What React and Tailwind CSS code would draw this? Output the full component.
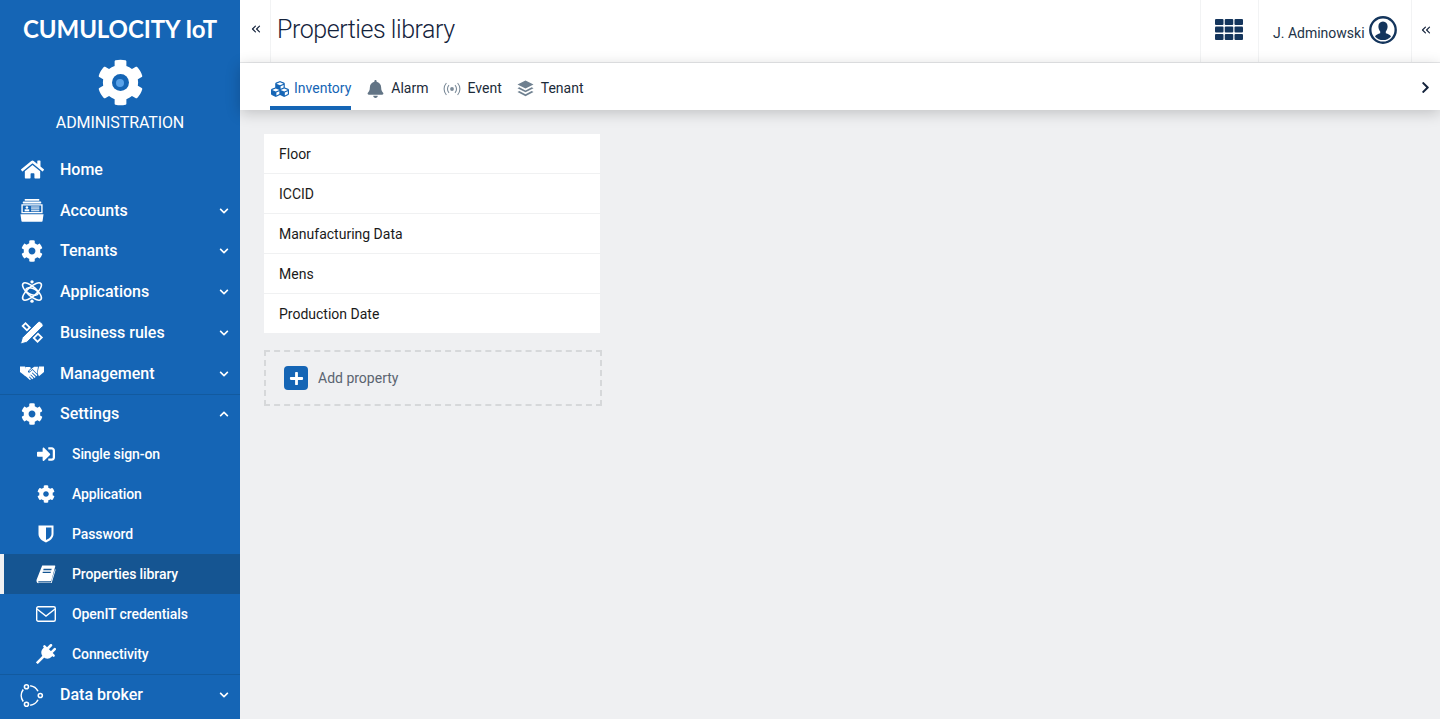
import React from "react";
import {
  FaHome,
  FaCog,
  FaSignInAlt,
  FaBell,
  FaCubes,
  FaPlus,
  FaChevronDown,
  FaChevronUp,
  FaChevronRight,
} from "react-icons/fa";
import { FiChevronsLeft } from "react-icons/fi";

const AccountsIcon = ({ className }) => (
  <svg viewBox="0 0 26 25" className={className} fill="currentColor">
    <rect x="5" y="0" width="16" height="2" rx="0.5" />
    <rect x="3" y="2.800" width="20" height="2" rx="0.5" />
    <path d="M1.500 5.600h23v10h-23z M3 7.100v7h20v-7z" fillRule="evenodd" />
    <circle cx="7.500" cy="9.300" r="1.400" />
    <rect x="5" y="11.200" width="5" height="2.200" />
    <rect x="12" y="8.200" width="9" height="1.100" />
    <rect x="12" y="10.200" width="9" height="1.100" />
    <rect x="12" y="12.200" width="9" height="1.100" />
    <path d="M0.500 16.600h25l-1 7a1 1 0 0 1-1 1h-21a1 1 0 0 1-1-1z" />
  </svg>
);

const AtomIcon = ({ className }) => (
  <svg viewBox="0 0 26 26" className={className} fill="none" stroke="currentColor" strokeWidth="1.700">
    <ellipse cx="13" cy="13" rx="13" ry="5" transform="rotate(42 13 13)" />
    <ellipse cx="13" cy="13" rx="13" ry="5" transform="rotate(-42 13 13)" />
    <ellipse cx="13" cy="13" rx="7" ry="3.500" transform="rotate(20 13 13)" />
    <circle cx="13" cy="2.500" r="1.800" fill="currentColor" stroke="none" />
    <circle cx="13" cy="23.500" r="1.800" fill="currentColor" stroke="none" />
  </svg>
);

const RulerIcon = ({ className }) => (
  <svg viewBox="0 0 26 26" className={className} fill="currentColor">
    <path
      d="M6 1.500L12 7.500 7.500 12 1.500 6z M6 4.300L4.300 6 7.500 9.200 9.200 7.500z"
      fillRule="evenodd"
    />
    <path
      d="M19.500 13L25 18.500 19 24.500 13.500 19z M19.500 15.800L16.300 19 19 21.700 22.200 18.500z"
      fillRule="evenodd"
    />
    <path
      d="M0.500 25.500l2-7L19.500 1.500a2 2 0 0 1 2.800 0l2.200 2.200a2 2 0 0 1 0 2.800L7.500 23.500z"
      stroke="#1565b5"
      strokeWidth="1"
    />
  </svg>
);

const HandshakeIcon = ({ className }) => (
  <svg viewBox="0 0 26 17" className={className} fill="currentColor">
    <path d="M0 1h5.500l2.500 8.500-2 2L0 7z" />
    <path d="M26 1h-5.500L19 8l1.500 3.500L26 7z" />
    <path d="M6 1.500h4.500L12 2.500 8.800 5.800c-.7.800.4 2.300 1.700 1.600l3-2.700 5.300 5.300-.8 1.500-4.600-4.200-.6.600 4.200 4.400-1.300 1.100-3.900-3.900-.6.600 3.400 3.500-1.300 1.200-3-3-.6.600 2.200 2.500-1.200.7-6-5.600z" />
    <path d="M13.500 2.500l2-1.200h4l-1.200 7.200-4.800-4.800-2.600 2.500c-.6.500-1.300-.2-.9-.7z" />
  </svg>
);

const ShieldIcon = ({ className }) => (
  <svg viewBox="0 0 16 18" className={className} fill="currentColor">
    <path
      d="M0.500 0.500h15v8.500c0 4-3.500 7-7.500 8.500C4 16 0.500 13 0.500 9z M8 2.500v12.600c2.600-1.200 5.500-3.300 5.500-6.100V2.500z"
      fillRule="evenodd"
    />
  </svg>
);

const BookIcon = ({ className }) => (
  <svg viewBox="0 0 20 20" className={className} fill="currentColor">
    <path
      d="M6 0.500h13c.6 0 .9.500.7 1l-4 14.500c-.2.700-.8 1-1.500 1H2.800c-1 0-1.300.8-1 1.200.3.300.7.300 1 .3h12.400l4.500-14.500.3 1.500-4 13.500H2.500C1 19.500 0 18 0 16.500c0-.5 0-.8.200-1.300z M7.500 4l-.4 1.400h8.500l.4-1.400z M6.700 7l-.4 1.400h8.500l.4-1.400z"
      fillRule="evenodd"
    />
  </svg>
);

const EnvelopeIcon = ({ className }) => (
  <svg viewBox="0 0 20 16" className={className} fill="none" stroke="currentColor" strokeWidth="1.400">
    <rect x="0.700" y="0.700" width="18.600" height="14.600" rx="1.500" />
    <path d="M1 3l9 7 9-7" />
  </svg>
);

const PlugIcon = ({ className }) => (
  <svg viewBox="0 0 20 20" className={className} fill="currentColor">
    <g transform="rotate(45 10 10)">
      <rect x="6" y="-1" width="2.600" height="6.500" rx="1.300" />
      <rect x="11.400" y="-1" width="2.600" height="6.500" rx="1.300" />
      <path d="M3.500 4.500h13a1 1 0 0 1 0 2.500h-.5v1c0 3.500-2.500 6-6 6s-6-2.500-6-6V7h-.5a1 1 0 0 1 0-2.500z" />
      <rect x="8.700" y="13" width="2.600" height="10" />
    </g>
  </svg>
);

const BrokerIcon = ({ className }) => (
  <svg viewBox="0 0 26 26" className={className} fill="none" stroke="currentColor" strokeWidth="1.700">
    <circle cx="7" cy="3.500" r="2.200" />
    <circle cx="22" cy="13" r="2.200" />
    <circle cx="7" cy="22.500" r="2.200" />
    <path d="M11 2.400a11 11 0 0 1 8.500 6" />
    <path d="M19.500 17.600a11 11 0 0 1-8.500 6" />
    <path d="M3.500 19.500a11 11 0 0 1 0-13" />
  </svg>
);

const EventIcon = ({ className }) => (
  <svg viewBox="0 0 18 14" className={className} fill="none" stroke="currentColor" strokeWidth="1.100">
    <circle cx="9" cy="7" r="1.900" fill="currentColor" stroke="none" />
    <path d="M6 3.200a5.500 5.500 0 0 0 0 7.600" />
    <path d="M12 3.200a5.500 5.500 0 0 1 0 7.600" />
    <path d="M3.400 1a9 9 0 0 0 0 12" />
    <path d="M14.600 1a9 9 0 0 1 0 12" />
  </svg>
);

const LayersIcon = ({ className }) => (
  <svg viewBox="0 0 18 18" className={className} fill="currentColor">
    <path d="M9 0.500l8.500 4.300L9 9.100 0.500 4.800z" />
    <path d="M2.500 7.700L9 11l6.500-3.300 2 1.100L9 13.100 0.500 8.800z" />
    <path d="M2.500 11.700L9 15l6.500-3.300 2 1.100L9 17.100 0.500 12.800z" />
  </svg>
);

const GridIcon = ({ className }) => (
  <svg viewBox="0 0 28 21" className={className} fill="currentColor">
    {[0, 9.750, 19.500].map((x) =>
      [0, 7.500, 15].map((y) => <rect key={`${x}-${y}`} x={x} y={y} width="8.500" height="6" rx="1" />)
    )}
  </svg>
);

const UserIcon = ({ className }) => (
  <svg viewBox="0 0 28 28" className={className}>
    <circle cx="14" cy="14" r="12.700" fill="none" stroke="currentColor" strokeWidth="2.400" />
    <path
      d="M14 5.500c3 0 4.600 2.200 4.600 5 0 2-.8 3.800-1.800 5v1.700c2 .8 4.400 1.400 5.200 3.200a10.500 10.500 0 0 1-16 0c.8-1.800 3.200-2.400 5.200-3.200v-1.700c-1-1.200-1.800-3-1.800-5 0-2.800 1.600-5 4.600-5z"
      fill="currentColor"
    />
  </svg>
);

const mainNav = [
  { label: "Home", icon: FaHome, size: "w-[23px] h-[21px]", height: "h-[41px]" },
  { label: "Accounts", icon: AccountsIcon, size: "w-[26px] h-[25px]", arrow: true, height: "h-[41px]" },
  { label: "Tenants", icon: FaCog, size: "w-[22px] h-[22px]", arrow: true, height: "h-[40px]" },
  { label: "Applications", icon: AtomIcon, size: "w-[25px] h-[25px]", arrow: true, height: "h-[41px]" },
  { label: "Business rules", icon: RulerIcon, size: "w-[25px] h-[25px]", arrow: true, height: "h-[41px]" },
  { label: "Management", icon: HandshakeIcon, size: "w-[26px] h-[17px]", arrow: true, height: "h-[41px]" },
];

const subNav = [
  { label: "Single sign-on", icon: FaSignInAlt, size: "w-[18px] h-[18px]" },
  { label: "Application", icon: FaCog, size: "w-[18px] h-[18px]" },
  { label: "Password", icon: ShieldIcon, size: "w-[16px] h-[18px]" },
  { label: "Properties library", icon: BookIcon, size: "w-[20px] h-[19px]", active: true },
  { label: "OpenIT credentials", icon: EnvelopeIcon, size: "w-[20px] h-[16px]" },
  { label: "Connectivity", icon: PlugIcon, size: "w-[20px] h-[20px]" },
];

const properties = ["Floor", "ICCID", "Manufacturing Data", "Mens", "Production Date"];

const NavRow = ({ label, icon: Icon, size, arrow, up, height = "h-[41px]", className = "" }) => (
  <div className={`flex items-center shrink-0 ${height} pl-5 pr-[11px] text-white ${className}`}>
    <div className="w-[24px] flex justify-center shrink-0">
      <Icon className={size} />
    </div>
    <span className="ml-4 text-[16px] font-medium">{label}</span>
    {arrow && (
      <span className="ml-auto">
        {up ? <FaChevronUp className="w-[10px] h-[10px]" /> : <FaChevronDown className="w-[10px] h-[10px]" />}
      </span>
    )}
  </div>
);

const SubRow = ({ label, icon: Icon, size, active }) => (
  <div
    className={`flex items-center shrink-0 h-[40px] text-white ${
      active ? "bg-[#155592] border-l-4 border-[#f0f1f3] pl-8" : "pl-9"
    }`}
  >
    <div className="w-[20px] flex justify-center shrink-0">
      <Icon className={size} />
    </div>
    <span className="ml-4 text-[14px] font-medium tracking-[-0.1px]">{label}</span>
  </div>
);

const Tab = ({ icon: Icon, size, label, active, gap, iconColor = "text-[#627485]" }) => (
  <div
    className={`flex items-center h-[47px] border-b-[4px] pt-[8px] ${
      active ? "border-[#1565b5] text-[#1565b5]" : "border-transparent text-[#1c2b3a]"
    }`}
  >
    <Icon className={`${size} ${active ? "text-[#1565b5]" : iconColor}`} />
    <span className={`${gap} text-[14px]`}>{label}</span>
  </div>
);

export default function App() {
  return (
    <div className="flex h-screen overflow-hidden bg-[#eff0f2] font-['Roboto',sans-serif]">
      <aside className="w-[240px] shrink-0 bg-[#1565b5] flex flex-col overflow-hidden">
        <div className="h-[149px] shrink-0 flex flex-col items-center text-white">
          <div className="mt-[13px] font-['Lato',sans-serif] font-bold text-[24px] leading-[31px] tracking-[-0.1px] whitespace-nowrap">
            CUMULOCITY IoT
          </div>
          <div className="relative mt-[15px] flex items-center justify-center">
            <FaCog className="w-[47px] h-[47px]" />
            <span className="absolute w-[17px] h-[17px] rounded-full bg-[#1565b5]" />
            <span className="absolute w-[8px] h-[8px] rounded-full bg-[#5aa2e8]" />
          </div>
          <div className="mt-[7px] text-[16px] leading-[20px] tracking-[-0.1px]">ADMINISTRATION</div>
        </div>

        {mainNav.map((item) => (
          <NavRow key={item.label} {...item} />
        ))}
        <NavRow
          label="Settings"
          icon={FaCog}
          size="w-[22px] h-[22px]"
          arrow
          up
          height="h-[40px]"
          className="border-t border-[#125a9f] pb-[2px]"
        />
        {subNav.map((item) => (
          <SubRow key={item.label} {...item} />
        ))}
        <NavRow
          label="Data broker"
          icon={BrokerIcon}
          size="w-[25px] h-[25px]"
          arrow
          className="border-t border-[#125a9f]"
        />
      </aside>

      <main className="flex-1 min-w-0 flex flex-col">
        <header className="h-[63px] shrink-0 bg-white border-b border-[#e9eaec] flex items-center text-[#14233c]">
          <div className="w-[31px] h-full flex items-center justify-center border-r border-[#f2f3f4] pb-[4px] pl-[1px]">
            <FiChevronsLeft className="w-[14px] h-[14px]" />
          </div>
          <h1 className="ml-[6px] text-[25px] font-light tracking-[-0.45px] pb-[3px]">Properties library</h1>
          <div className="ml-auto flex h-full items-center">
            <div className="w-[58px] h-full flex items-center justify-center border-l border-[#f2f3f4] pb-[4px] pr-[2px]">
              <GridIcon className="w-[28px] h-[21px] text-[#14355c]" />
            </div>
            <div className="w-[153px] h-full flex items-center border-l border-[#f2f3f4] pl-[14px]">
              <span className="text-[14px] text-[#233247] pt-[4px]">J. Adminowski</span>
              <UserIcon className="ml-[4px] w-[28px] h-[28px] text-[#14355c] -mt-[2px]" />
            </div>
            <div className="w-[29px] h-full flex items-center justify-center border-l border-[#f2f3f4] pb-[2px]">
              <FiChevronsLeft className="w-[14px] h-[14px]" />
            </div>
          </div>
        </header>

        <nav className="h-[47px] shrink-0 bg-white flex items-center pl-[30px] pr-[10px] shadow-[0_3px_14px_rgba(0,0,0,0.2)] z-10">
          <div className="flex gap-4">
            <Tab icon={FaCubes} size="w-[20px] h-[18px]" label="Inventory" gap="ml-[4px]" active />
            <Tab icon={FaBell} size="w-[17px] h-[18px]" label="Alarm" gap="ml-[7px]" />
            <div className="-ml-[2px]">
              <Tab icon={EventIcon} size="w-[18px] h-[14px]" label="Event" gap="ml-[7px]" iconColor="text-[#7c8b99]" />
            </div>
            <div className="-ml-[1px]">
              <Tab icon={LayersIcon} size="w-[17px] h-[17px]" label="Tenant" gap="ml-[7px]" iconColor="text-[#6f8090]" />
            </div>
          </div>
          <FaChevronRight className="ml-auto w-[13px] h-[13px] text-[#14233c] mt-[1px] -mr-[2px]" />
        </nav>

        <section className="flex-1 pt-6 pl-6">
          <div className="w-[336px] bg-white">
            {properties.map((name, i) => (
              <div
                key={name}
                className={`flex items-center pl-[15px] pt-[1px] text-[14px] text-[#1a1a1a] ${
                  i > 0 ? "h-[40px] border-t border-[#f0f1f2]" : "h-[39px]"
                }`}
              >
                {name}
              </div>
            ))}
          </div>
          <div className="mt-[17px] w-[338px] h-[56px] border-2 border-dashed border-[#d6d8da] flex items-center pl-[18px]">
            <div className="w-[24px] h-[24px] rounded-[4px] bg-[#1565b5] flex items-center justify-center">
              <FaPlus className="w-[15px] h-[15px] text-white" />
            </div>
            <span className="ml-[10px] text-[14px] text-[#5a6470]">Add property</span>
          </div>
        </section>
      </main>
    </div>
  );
}
